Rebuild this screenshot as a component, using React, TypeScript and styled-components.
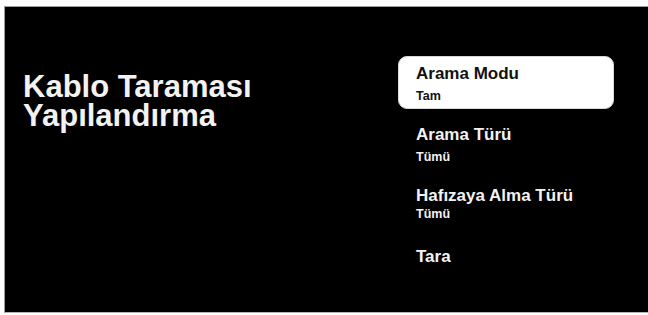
import React from 'react';
import styled, { createGlobalStyle } from 'styled-components';

const GlobalStyle = createGlobalStyle`
  html, body {
    margin: 0;
    padding: 0;
    background: #ffffff;
  }
  body {
    font-family: "Liberation Sans", Arial, sans-serif;
    width: 648px;
    height: 315px;
    overflow: hidden;
  }
`;

const Screen = styled.div`
  margin: 6px 0 0 4px;
  height: 305px;
  background: #000;
  border-top: 1px solid #9c9c9c;
  border-left: 1px solid #9c9c9c;
  border-bottom: 1px solid #b4b4b4;
  display: grid;
  grid-template-columns: 393px 216px;
  align-items: start;
`;

const Heading = styled.h1`
  margin: 0;
  padding: 65px 0 0 18px;
  font-size: 31px;
  line-height: 29px;
  font-weight: bold;
  color: #f2f2f2;
`;

const HeadingLine = styled.span`
  display: block;
`;

const Menu = styled.ul`
  list-style: none;
  margin: 0;
  padding: 49px 0 0 0;
  display: flex;
  flex-direction: column;
  gap: 8px;
`;

const Item = styled.li<{ $active?: boolean }>`
  height: 53px;
  box-sizing: border-box;
  padding: 7px 0 0 17px;
  border-radius: 9px;
  background: ${(p) => (p.$active ? '#ffffff' : 'transparent')};
  border: 1px solid ${(p) => (p.$active ? '#d8d8d8' : 'transparent')};
  color: ${(p) => (p.$active ? '#111111' : '#f2f2f2')};
  display: flex;
  flex-direction: column;
`;

const Label = styled.span`
  font-size: 17px;
  line-height: 20px;
  font-weight: bold;
`;

const Value = styled.span<{ $tight?: boolean }>`
  margin-top: ${(p) => (p.$tight ? '0px' : '4px')};
  font-size: 12.5px;
  line-height: 16px;
  font-weight: bold;
`;

const items = [
  { label: 'Arama Modu', value: 'Tam', active: true },
  { label: 'Arama Türü', value: 'Tümü' },
  { label: 'Hafızaya Alma Türü', value: 'Tümü', tight: true },
  { label: 'Tara' },
];

export default function App() {
  return (
    <>
      <GlobalStyle />
      <Screen>
        <Heading>
          <HeadingLine>Kablo Taraması</HeadingLine>
          <HeadingLine>Yapılandırma</HeadingLine>
        </Heading>
        <Menu>
          {items.map((it) => (
            <Item key={it.label} $active={it.active}>
              <Label>{it.label}</Label>
              {it.value && <Value $tight={it.tight}>{it.value}</Value>}
            </Item>
          ))}
        </Menu>
      </Screen>
    </>
  );
}
